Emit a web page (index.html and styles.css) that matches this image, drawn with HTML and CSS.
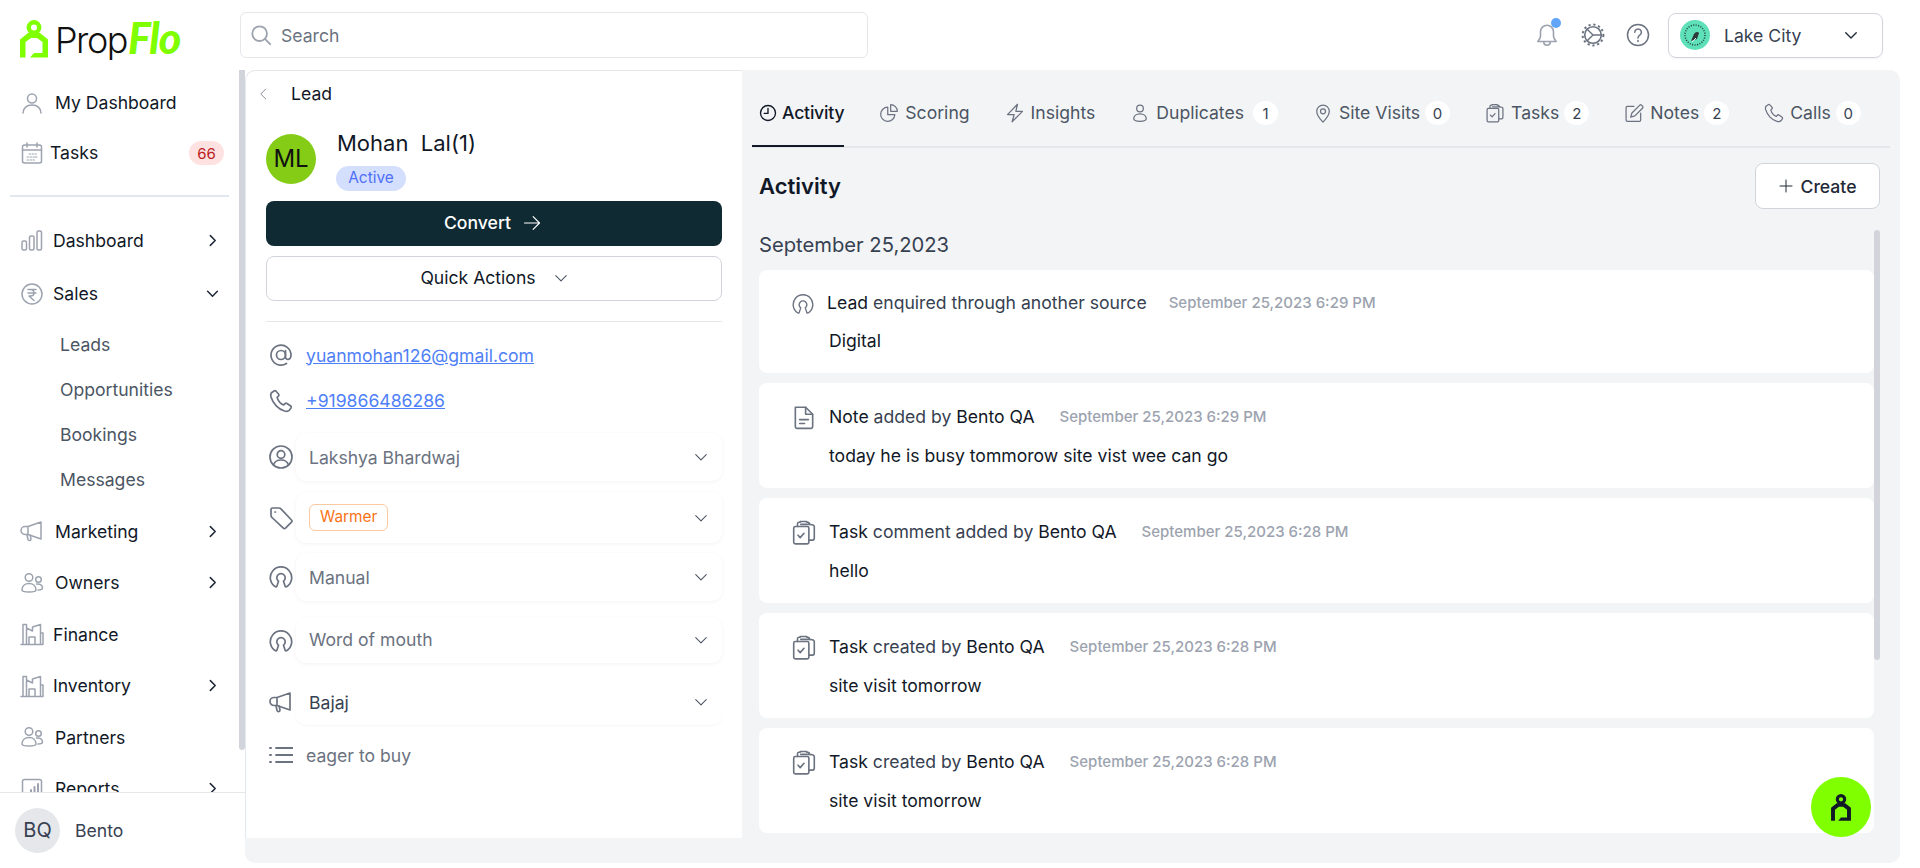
FILE: index.html
```html
<!DOCTYPE html>
<html lang="en">
<head>
  <meta charset="utf-8">
  <title>PropFlo - Lead</title>
  <link rel="stylesheet" href="styles.css">
</head>
<body>
<svg class="sprite" xmlns="http://www.w3.org/2000/svg">
  <symbol id="i-user" viewBox="0 0 24 24"><circle cx="12" cy="7.500" r="4.500"/><path d="M3 22c0-5 4-8 9-8s9 3 9 8"/></symbol>
  <symbol id="i-calendar" viewBox="0 0 24 24"><rect x="2.500" y="4" width="19" height="18" rx="2"/><path d="M2.500 9h19M7 2v4M17 2v4"/><path d="M9 13h1.500M12 13h1.500M15 13h1.500M7 16h1.500M10 16h1.500M13 16h1.500M15.500 16h1.500M7 19h1.500M10 19h1.500M13 19h1.500" stroke-width="1"/></symbol>
  <symbol id="i-bars" viewBox="0 0 24 24"><rect x="2" y="13" width="4.500" height="9" rx="1.500"/><rect x="9.500" y="8" width="4.500" height="14" rx="1.500"/><rect x="17" y="3" width="4.500" height="19" rx="1.500"/></symbol>
  <symbol id="i-rupee" viewBox="0 0 24 24"><circle cx="12" cy="12" r="10"/><path d="M8 7.500h8M8 11h8M9 7.500h1.500c2 0 3.500 1.500 3.500 3.500s-1.500 3-3.500 3H9l5 4.500"/></symbol>
  <symbol id="i-mega" viewBox="0 0 24 24"><path d="M21 3 8 7.500H5a3.500 3.500 0 0 0 0 8h3L21 20zM21 3v17M8 7.500v8"/><path d="M7 15.500l1 5c.2 1.500 3 1.500 3-.5l-.8-3.800"/></symbol>
  <symbol id="i-users" viewBox="0 0 24 24"><circle cx="9" cy="6.500" r="3.800"/><circle cx="18.500" cy="8.500" r="2.800"/><path d="M2 19c0-4 3-6.500 7-6.500s7 2.500 7 6.500c0 1.500-3 2-7 2s-7-.5-7-2z"/><path d="M16.500 13c3 -.5 6 1 6 4 0 1.500-1.500 2-4.500 2"/></symbol>
  <symbol id="i-build" viewBox="0 0 24 24"><path d="M1 22.500h22M3 22V2.500h3.500V22M6.500 6l6 3V5l8-2.500V22M9 22v-7h6v7M20.500 11H23v11"/></symbol>
  <symbol id="i-report" viewBox="0 0 24 24"><rect x="2.500" y="2.500" width="19" height="19" rx="2"/><path d="M7 18v-2M11 18v-5M14.500 18V10M18 18V7" stroke-width="2"/></symbol>
  <symbol id="i-bell" viewBox="0 0 24 24"><path d="M3.500 18c1.500-1.500 2.500-2.500 2.500-5V9a6 6 0 0 1 12 0v4c0 2.500 1 3.500 2.500 5z"/><path d="M9 18.500c0 4 6 4 6 0"/></symbol>
  <symbol id="i-gear" viewBox="0 0 24 24"><circle cx="12" cy="12" r="8.300" stroke-width="1.600"/><circle cx="12" cy="12" r="10.400" stroke-width="2" stroke-dasharray="2.200 2.700" stroke-linecap="butt"/><path d="M6.200 6.200 12 12l-5.800 5.800M12 12h8.300" stroke-width="1.400"/></symbol>
  <symbol id="i-help" viewBox="0 0 24 24"><circle cx="12" cy="12" r="10.500"/><path d="M8.800 9.300a3.300 3.300 0 1 1 5 2.800c-1.200.8-1.800 1.500-1.800 3"/><path d="M12 17.500v1"/></symbol>
  <symbol id="i-search" viewBox="0 0 24 24"><circle cx="10.500" cy="10.500" r="8"/><path d="m16.500 16.500 5.500 5.500"/></symbol>
  <symbol id="i-source" viewBox="0 0 24 24"><path d="M6.500 21.800a10.700 10.700 0 1 1 11 0c-.6.300-1 .1-1.300-.4l-1.700-5.200a4.200 4.200 0 1 0-5 0l-1.700 5.200c-.3.500-.7.700-1.300.4z"/></symbol>
  <symbol id="i-at" viewBox="0 0 24 24"><circle cx="12" cy="12" r="4.500"/><path d="M16.500 7.500V14c0 3.500 5.500 3.500 5.500-2a10 10 0 1 0-4.500 8.500"/></symbol>
  <symbol id="i-phone" viewBox="0 0 24 24"><path d="M5 2 2.800 3.500C1.500 4.500 1.500 6 2 8c2 6.500 7.500 12.500 13.500 14 2 .5 4 .2 5-1l1.500-2c.5-.7.3-1.500-.3-2L18 14.500c-.7-.5-1.500-.4-2 .2l-1.200 1.300c-3-1-5.500-4-6.700-7.500l1.300-1.300c.6-.5.7-1.300.3-2L7.300 2.500C6.800 1.800 5.800 1.500 5 2z"/></symbol>
  <symbol id="i-ucircle" viewBox="0 0 24 24"><circle cx="12" cy="12" r="11"/><circle cx="12" cy="9.500" r="3.800"/><path d="M4.500 20c1-3.500 4-5 7.500-5s6.500 1.500 7.500 5"/></symbol>
  <symbol id="i-tag" viewBox="0 0 24 24"><path d="M2 3.500C2 2.500 2.500 2 3.500 2H10c.7 0 1.200.2 1.700.7L22.500 14c.7.7.7 1.500 0 2.200l-6 6c-.7.7-1.500.7-2.200 0L3 11.500c-.7-.6-1-1-1-2z"/><path d="M6 6h.5"/></symbol>
  <symbol id="i-list" viewBox="0 0 24 24"><path d="M7 5h17M7 12h17M7 19h17" stroke-width="1.800"/><path d="M1 5h1M1 12h1M1 19h1" stroke-width="2"/></symbol>
  <symbol id="i-clock" viewBox="0 0 24 24"><circle cx="12" cy="12" r="10"/><path d="M12 6v6.500H7"/></symbol>
  <symbol id="i-pie" viewBox="0 0 24 24"><path d="M10.500 5a8.500 8.500 0 1 0 8.500 9h-8.500z"/><path d="M14 2a8 8 0 0 1 8 8h-8z"/></symbol>
  <symbol id="i-bolt" viewBox="0 0 24 24"><path d="M15 1.500 3 14h8l-2.500 8.500L21 10h-8z"/></symbol>
  <symbol id="i-person" viewBox="0 0 24 24"><circle cx="12" cy="6.500" r="4"/><path d="M4.500 19c0-3.500 3-6 7.500-6s7.500 2.500 7.500 6c0 2-3 3-7.500 3s-7.500-1-7.500-3z"/></symbol>
  <symbol id="i-pin" viewBox="0 0 24 24"><path d="M12 23C8 19 4.500 14.500 4.500 10a7.500 7.500 0 0 1 15 0c0 4.500-3.500 9-7.500 13z"/><circle cx="12" cy="10" r="3"/></symbol>
  <symbol id="i-clip" viewBox="0 0 24 24"><rect x="2.500" y="6.500" width="14" height="16" rx="1.500"/><path d="M6 6.500V4c0-1 .5-1.500 1.500-1.500h1V1.800h6v.7h1c1 0 1.500.5 1.500 1.500v.5M9 4.500h7c3.500 0 5.500.5 5.500 2V17c0 1.500-.5 2-1.500 2h-3.500"/><path d="m6.500 14.500 2 2.200 3.500-4"/></symbol>
  <symbol id="i-note" viewBox="0 0 24 24"><path d="M4 2.500h9.500L20 9v11.500c0 1-.5 1.500-1.500 1.500h-13c-1 0-1.500-.5-1.500-1.500z"/><path d="M13.500 2.500V9H20M8 14h8M8 17.500h4.500"/></symbol>
  <symbol id="i-edit" viewBox="0 0 24 24"><path d="M12 4H4c-1 0-1.500.5-1.500 1.500v15c0 1 .5 1.500 1.500 1.500h14.500c1 0 1.500-.5 1.500-1.500V12"/><path d="M19 2.500 9.500 12 8 17l5-1.500L22.500 6c.5-1 .3-1.500-.2-2.200l-1.500-1.300c-.6-.6-1.300-.5-1.800 0z"/></symbol>
  <symbol id="i-plus" viewBox="0 0 24 24"><path d="M12 3v18M3 12h18"/></symbol>
  <symbol id="i-arrow" viewBox="0 0 24 24"><path d="M2 12h20M13.500 3.500 22 12l-8.500 8.500"/></symbol>
  <symbol id="i-down" viewBox="0 0 24 24"><path d="m3 8 9 9 9-9"/></symbol>
  <symbol id="i-right" viewBox="0 0 24 24"><path d="m8 3 9 9-9 9"/></symbol>
  <symbol id="i-left" viewBox="0 0 24 24"><path d="m16 3-9 9 9 9"/></symbol>
  <symbol id="i-mark" viewBox="0 0 28 38"><circle cx="14" cy="7.500" r="5.200" fill="none" stroke="currentColor" stroke-width="4.400"/><path d="M0 37.500V19.500L8 13h12l8 6.500v18H10l4-4.500h8.500V22l-5.500-4h-6l-5.500 4v15.500z" fill="currentColor" stroke="none"/></symbol>
</svg>

<header class="topbar">
  <div class="logo">
    <svg class="logo-mark"><use href="#i-mark"/></svg>
    <span class="logo-prop">Prop</span><span class="logo-flo">Flo</span>
  </div>
  <label class="search">
    <svg class="ico search-ico"><use href="#i-search"/></svg>
    <span>Search</span>
  </label>
  <div class="top-actions">
    <span class="bell"><svg class="ico"><use href="#i-bell"/></svg><i class="bell-dot"></i></span>
    <svg class="ico top-ico"><use href="#i-gear"/></svg>
    <svg class="ico top-ico"><use href="#i-help"/></svg>
    <div class="project">
      <svg class="project-pic" viewBox="0 0 30 30">
        <circle cx="15" cy="15" r="15" fill="#5ee0b8"/>
        <circle cx="15" cy="15" r="10" fill="none" stroke="#1f3b36" stroke-width="1.500" stroke-dasharray="1 1.500"/>
        <path d="M11 21l3-7c1-2 4-3 5-1l-2 6z" fill="#2f3a3a"/>
        <path d="M12 22l4-4" stroke="#e9efe9" stroke-width="1"/>
      </svg>
      <span class="project-name">Lake City</span>
      <svg class="ico project-chev"><use href="#i-down"/></svg>
    </div>
  </div>
</header>

<div class="body">
  <aside class="sidebar">
    <nav class="nav">
      <a class="nav-top nav-wide"><svg class="ico nav-ico"><use href="#i-user"/></svg>My Dashboard</a>
      <a class="nav-top nav-tasks"><svg class="ico nav-ico"><use href="#i-calendar"/></svg>Tasks<b class="count">66</b></a>
      <hr class="nav-line">
      <a class="nav-item"><svg class="ico nav-ico"><use href="#i-bars"/></svg>Dashboard<svg class="ico chev"><use href="#i-right"/></svg></a>
      <a class="nav-item nav-sales"><svg class="ico nav-ico"><use href="#i-rupee"/></svg>Sales<svg class="ico chev"><use href="#i-down"/></svg></a>
      <div class="subnav">
        <a>Leads</a>
        <a>Opportunities</a>
        <a>Bookings</a>
        <a>Messages</a>
      </div>
      <a class="nav-item nav-wide"><svg class="ico nav-ico"><use href="#i-mega"/></svg>Marketing<svg class="ico chev"><use href="#i-right"/></svg></a>
      <a class="nav-item nav-wide"><svg class="ico nav-ico"><use href="#i-users"/></svg>Owners<svg class="ico chev"><use href="#i-right"/></svg></a>
      <a class="nav-item"><svg class="ico nav-ico"><use href="#i-build"/></svg>Finance</a>
      <a class="nav-item"><svg class="ico nav-ico"><use href="#i-build"/></svg>Inventory<svg class="ico chev"><use href="#i-right"/></svg></a>
      <a class="nav-item nav-wide"><svg class="ico nav-ico"><use href="#i-users"/></svg>Partners</a>
      <a class="nav-item nav-wide"><svg class="ico nav-ico"><use href="#i-report"/></svg>Reports<svg class="ico chev"><use href="#i-right"/></svg></a>
    </nav>
    <div class="side-thumb"></div>
    <div class="side-user">
      <span class="side-avatar">BQ</span>
      <span>Bento</span>
    </div>
  </aside>

  <main class="main">
    <section class="lead">
      <div class="lead-back"><svg class="ico back-ico"><use href="#i-left"/></svg>Lead</div>
      <div class="lead-profile">
        <span class="lead-avatar">ML</span>
        <div>
          <div class="lead-name">Mohan&nbsp; Lal(1)</div>
          <span class="pill">Active</span>
        </div>
      </div>
      <a class="btn btn-dark">Convert<svg class="ico btn-ico"><use href="#i-arrow"/></svg></a>
      <a class="btn btn-line">Quick Actions<svg class="ico btn-chev"><use href="#i-down"/></svg></a>
      <hr class="lead-line">

      <div class="contact contact-mail"><svg class="ico det-ico"><use href="#i-at"/></svg><a href="#">yuanmohan126@gmail.com</a></div>
      <div class="contact"><svg class="ico det-ico"><use href="#i-phone"/></svg><a href="#">+919866486286</a></div>

      <div class="field field-owner"><svg class="ico det-ico"><use href="#i-ucircle"/></svg><div class="field-box">Lakshya Bhardwaj<svg class="ico field-chev"><use href="#i-down"/></svg></div></div>
      <div class="field field-stage"><svg class="ico det-ico"><use href="#i-tag"/></svg><div class="field-box"><span class="tag">Warmer</span><svg class="ico field-chev"><use href="#i-down"/></svg></div></div>
      <div class="field field-source"><svg class="ico det-ico"><use href="#i-source"/></svg><div class="field-box">Manual<svg class="ico field-chev"><use href="#i-down"/></svg></div></div>
      <div class="field field-word"><svg class="ico det-ico"><use href="#i-source"/></svg><div class="field-box">Word of mouth<svg class="ico field-chev"><use href="#i-down"/></svg></div></div>
      <div class="field field-camp"><svg class="ico det-ico"><use href="#i-mega"/></svg><div class="field-box">Bajaj<svg class="ico field-chev"><use href="#i-down"/></svg></div></div>
      <div class="contact contact-note"><svg class="ico det-ico"><use href="#i-list"/></svg><span>eager to buy</span></div>
    </section>

    <section class="feed">
      <div class="tabs">
        <a class="tab tab-on"><svg class="ico tab-ico"><use href="#i-clock"/></svg>Activity</a>
        <a class="tab"><svg class="ico tab-ico"><use href="#i-pie"/></svg>Scoring</a>
        <a class="tab"><svg class="ico tab-ico"><use href="#i-bolt"/></svg>Insights</a>
        <a class="tab"><svg class="ico tab-ico"><use href="#i-person"/></svg>Duplicates<b class="num num-first">1</b></a>
        <a class="tab"><svg class="ico tab-ico"><use href="#i-pin"/></svg>Site Visits<b class="num">0</b></a>
        <a class="tab"><svg class="ico tab-ico"><use href="#i-clip"/></svg>Tasks<b class="num">2</b></a>
        <a class="tab"><svg class="ico tab-ico"><use href="#i-edit"/></svg>Notes<b class="num">2</b></a>
        <a class="tab"><svg class="ico tab-ico"><use href="#i-phone"/></svg>Calls<b class="num">0</b></a>
      </div>
      <div class="feed-head">
        <h2>Activity</h2>
        <a class="create"><svg class="ico create-ico"><use href="#i-plus"/></svg>Create</a>
      </div>
      <div class="feed-date">September 25,2023</div>
      <div class="feed-list">
        <article class="card card-first">
          <div class="card-head"><svg class="ico card-ico"><use href="#i-source"/></svg><p><span class="dark">Lead</span> enquired through another source</p><time>September 25,2023 6:29 PM</time></div>
          <p class="card-text">Digital</p>
        </article>
        <article class="card">
          <div class="card-head"><svg class="ico card-ico"><use href="#i-note"/></svg><p><span class="dark">Note</span> added by <span class="dark">Bento QA</span></p><time>September 25,2023 6:29 PM</time></div>
          <p class="card-text">today he is busy tommorow site vist wee can go</p>
        </article>
        <article class="card">
          <div class="card-head"><svg class="ico card-ico"><use href="#i-clip"/></svg><p><span class="dark">Task</span> comment added by <span class="dark">Bento QA</span></p><time>September 25,2023 6:28 PM</time></div>
          <p class="card-text">hello</p>
        </article>
        <article class="card">
          <div class="card-head"><svg class="ico card-ico"><use href="#i-clip"/></svg><p><span class="dark">Task</span> created by <span class="dark">Bento QA</span></p><time>September 25,2023 6:28 PM</time></div>
          <p class="card-text">site visit tomorrow</p>
        </article>
        <article class="card">
          <div class="card-head"><svg class="ico card-ico"><use href="#i-clip"/></svg><p><span class="dark">Task</span> created by <span class="dark">Bento QA</span></p><time>September 25,2023 6:28 PM</time></div>
          <p class="card-text">site visit tomorrow</p>
        </article>
      </div>
      <div class="feed-thumb"></div>
    </section>

    <a class="fab"><svg class="fab-mark"><use href="#i-mark"/></svg></a>
  </main>
</div>
</body>
</html>
```

FILE: styles.css
```css
* { box-sizing: border-box; }

html, body { height: 100%; }

body {
  margin: 0;
  overflow: hidden;
  background: #fff;
  color: #111827;
  font-family: Inter, "Liberation Sans", sans-serif;
  font-size: 17.600px;
}

.sprite { display: none; }

a { color: inherit; text-decoration: none; }
p { margin: 0; }

.ico {
  fill: none;
  stroke: currentColor;
  stroke-width: 1.5;
  stroke-linecap: round;
  stroke-linejoin: round;
  flex: none;
}

/* top bar */
.topbar {
  display: flex;
  align-items: center;
  height: 70px;
  padding-right: 37px;
}

.logo {
  display: flex;
  align-items: flex-start;
  width: 240px;
  height: 70px;
  padding: 20px 0 0 20px;
}

.logo-mark { width: 28px; height: 38px; color: #7fff00; margin-right: 7px; }

.logo-prop {
  font-family: Inter, sans-serif;
  font-weight: 300;
  font-size: 36px;
  line-height: 40px;
  letter-spacing: -1.500px;
  color: #111;
}

.logo-flo {
  margin-left: 1px;
  font-family: Lato, sans-serif;
  font-style: italic;
  font-weight: 900;
  font-size: 43px;
  line-height: 36px;
  letter-spacing: -1px;
  color: #7fff00;
}

.search {
  display: flex;
  align-items: center;
  gap: 9px;
  width: 628px;
  height: 46px;
  padding-left: 9px;
  border: 1px solid #e5e7eb;
  border-radius: 6px;
  color: #6b7280;
}

.search-ico { width: 22px; height: 22px; color: #9ca3af; stroke-width: 2; }

.top-actions {
  display: flex;
  align-items: center;
  margin-left: auto;
  gap: 21px;
}

.bell { position: relative; display: flex; color: #9ca3af; }
.bell .ico { width: 26px; height: 28px; }

.bell-dot {
  position: absolute;
  top: -3px;
  right: -1px;
  width: 10px;
  height: 10px;
  border-radius: 50%;
  background: #60a5fa;
}

.top-ico { width: 24px; height: 24px; color: #6b7280; }

.project {
  display: flex;
  align-items: center;
  width: 215px;
  height: 45px;
  margin-left: -3px;
  padding: 0 24px 0 11px;
  border: 1px solid #d1d5db;
  border-radius: 8px;
  box-shadow: 0 1px 2px rgba(0, 0, 0, .05);
  color: #374151;
}

.project-pic { width: 30px; height: 30px; flex: none; }
.project-name { margin-left: 14px; }
.project-chev { width: 14px; height: 14px; margin-left: auto; color: #1f2937; stroke-width: 2.400; }

/* layout */
.body { display: flex; height: 798px; }

/* sidebar */
.sidebar {
  position: relative;
  display: flex;
  flex-direction: column;
  flex: none;
  width: 245px;
}

.nav { height: 722px; overflow: hidden; padding-top: 8px; padding-right: 6px; }

.nav a { display: flex; align-items: center; }

.nav-top, .nav-item { padding-left: 20px; gap: 9px; }
.nav-top { height: 49px; }
.nav-item { height: 51.500px; }
.nav-wide { gap: 11px; }
.nav-tasks { gap: 6px; margin-top: 1px; }
.nav-sales { margin-top: 2px; }

.nav-ico { width: 24px; height: 24px; color: #9ca3af; }

.chev {
  width: 13px;
  height: 13px;
  margin-left: auto;
  margin-right: 20px;
  color: #1f2937;
  stroke-width: 2.800;
}

.count {
  margin-left: auto;
  margin-right: 15px;
  width: 35px;
  height: 24px;
  border-radius: 12px;
  background: #fee2e2;
  color: #b91c1c;
  font-size: 15px;
  font-weight: 400;
  line-height: 25px;
  text-align: center;
}

.nav-line { height: 2px; margin: 18px 10px 17.500px 10px; border: 0; background: #e2e8f0; }

.subnav { margin: 2.500px 0 3.500px; }
.nav .subnav a { height: 45px; padding-left: 60px; color: #4b5563; }

.side-thumb {
  position: absolute;
  top: 0;
  right: 0;
  width: 6px;
  height: 680px;
  border-radius: 0 0 3px 3px;
  background: #d1d5db;
}

.side-user {
  display: flex;
  align-items: center;
  gap: 15px;
  height: 76px;
  padding-left: 15px;
  border-top: 1px solid #e5e7eb;
  color: #374151;
}

.side-avatar {
  width: 45px;
  height: 45px;
  border-radius: 50%;
  background: #e5e7eb;
  font-size: 20px;
  line-height: 45px;
  text-align: center;
}

/* main area */
.main {
  position: relative;
  display: flex;
  align-items: flex-start;
  width: 1655px;
  height: 793px;
  border-radius: 10px;
  background: #f3f4f6;
}

.lead {
  flex: none;
  width: 497px;
  height: 768px;
  padding: 0 20px 0 20px;
  border-top: 1px solid #e5e7eb;
  border-left: 1px solid #e2e8f0;
  border-top-left-radius: 10px;
  background: #fff;
}

.lead-back { display: flex; align-items: center; height: 45px; color: #111827; }
.back-ico { width: 13px; height: 16px; margin-left: -9px; margin-right: 21px; color: #6b7280; }

.lead-profile { display: flex; align-items: flex-start; gap: 21px; margin-top: 17px; }

.lead-avatar {
  width: 50px;
  height: 50px;
  margin-top: 1px;
  border-radius: 50%;
  background: #84cc16;
  color: #111;
  font-size: 24px;
  line-height: 50px;
  text-align: center;
}

.lead-name { margin-top: -1px; font-size: 22px; line-height: 22px; }

.pill {
  display: block;
  width: 70px;
  height: 25px;
  margin-top: 12px;
  margin-left: -1px;
  border-radius: 13px;
  background: #d4dffe;
  color: #4f6ef7;
  font-size: 15.400px;
  line-height: 24px;
  text-align: center;
}

.btn {
  display: flex;
  align-items: center;
  justify-content: center;
  height: 45px;
  padding-bottom: 2px;
  border-radius: 8px;
}

.btn-dark { margin-top: 10px; padding-right: 3px; background: #102a33; color: #fff; font-weight: 500; gap: 12px; }
.btn-ico { width: 18px; height: 18px; }
.btn-line { margin-top: 10px; border: 1px solid #d1d5db; gap: 18px; }
.btn-chev { width: 14px; height: 14px; color: #4b5563; stroke-width: 1.800; }

.lead-line { height: 1px; margin: 20px 0 10px; border: 0; background: #e5e7eb; }

.contact { display: flex; align-items: center; height: 45px; color: #6b7280; }
.contact a { color: #4f7ff7; text-decoration: underline; }
.contact .det-ico { margin-right: 13px; }
.contact-mail { height: 46px; }
.contact-note { margin-top: 8px; height: 44px; }

.det-ico { width: 24px; height: 24px; margin-left: 3px; color: #6b7280; stroke-width: 1.700; }

.field { display: flex; align-items: center; gap: 3px; color: #6b7280; }

.field-box {
  display: flex;
  align-items: center;
  flex: 1;
  height: 48px;
  padding: 0 14px 0 13px;
  border-radius: 10px;
  box-shadow: 0 1px 4px rgba(17, 24, 39, .05);
}

.field-chev { width: 14px; height: 14px; margin-left: auto; color: #4b5563; stroke-width: 1.800; }

.field-owner { margin-top: 10px; }
.field-stage { margin-top: 11px; }
.field-stage .field-box { height: 51px; }
.field-source { margin-top: 10px; }
.field-word { margin-top: 17px; }
.field-word .field-box { height: 45px; padding-bottom: 2px; }
.field-camp { margin-top: 16px; color: #374151; }
.field-camp .field-box { height: 46px; box-shadow: 0 1px 2px rgba(17, 24, 39, .04); }

.tag {
  height: 27px;
  padding: 0 10px;
  border: 1px solid #fdc9a0;
  border-radius: 6px;
  color: #f97316;
  font-size: 15.400px;
  line-height: 24px;
}

/* activity feed */
.feed {
  position: relative;
  flex: 1;
  height: 768px;
  padding: 0 10px;
  overflow: hidden;
  color: #374151;
}

.tabs {
  display: flex;
  gap: 35px;
  height: 78px;
  border-bottom: 2px solid #e5e7eb;
}

.tab {
  display: flex;
  align-items: center;
  gap: 6px;
  height: 77px;
  padding-top: 8px;
  white-space: nowrap;
  color: #4b5563;
}

.tab-on {
  gap: 5px;
  padding-top: 10px;
  padding-left: 7px;
  border-bottom: 2px solid #111827;
  color: #111827;
  font-weight: 500;
  letter-spacing: -.2px;
}

.tab-ico { width: 20px; height: 20px; color: #6b7280; }
.tab-on .tab-ico { width: 18px; height: 18px; color: #111827; stroke-width: 1.800; }

.num {
  width: 25px;
  height: 24px;
  margin-left: -1px;
  border-radius: 50%;
  background: #fff;
  color: #374151;
  font-size: 15px;
  font-weight: 400;
  line-height: 25px;
  text-align: center;
}

.num-first { margin-left: 3px; }

.feed-head {
  display: flex;
  align-items: center;
  justify-content: space-between;
  height: 46px;
  margin: 15px 10px 0 7px;
}

.feed-head h2 { margin: 0; padding-bottom: 1px; color: #111827; font-size: 22px; font-weight: 600; }

.create {
  display: flex;
  align-items: center;
  justify-content: center;
  gap: 6px;
  width: 125px;
  height: 46px;
  border: 1px solid #d1d5db;
  border-radius: 8px;
  background: #fff;
  color: #1f2937;
  font-weight: 500;
}

.create-ico { width: 16px; height: 16px; }

.feed-date { margin: 24px 0 13px 7px; font-size: 20.200px; line-height: 24px; }

.feed-list { display: flex; flex-direction: column; gap: 10px; margin: 0 16px 0 7px; }

.card {
  flex: none;
  height: 105px;
  padding: 21px 0 0 33px;
  border-radius: 8px;
  background: #fff;
}

.card-first { height: 103px; padding-top: 20px; }

.card-head { display: flex; align-items: center; height: 24px; color: #374151; }
.card-head p { margin-right: 25px; }
.card-first .card-head p { margin-right: 22px; }
.card-head time { color: #9ca3af; font-size: 15px; font-weight: 500; }
.card-ico { width: 26px; height: 27px; margin: 3px 12px 0 -1px; color: #6b7280; }
.card-first .card-ico { width: 22px; height: 24px; margin: 3px 13px 0 0; }

.dark { color: #111827; }

.card-text { margin-top: 16px; padding-left: 37px; line-height: 24px; color: #111827; }
.card-first .card-text { margin-top: 15px; }

.feed-thumb {
  position: absolute;
  top: 160px;
  right: 20px;
  width: 6px;
  height: 430px;
  border-radius: 3px;
  background: #d1d5db;
}

.fab {
  position: absolute;
  left: 1566px;
  top: 707px;
  display: flex;
  align-items: center;
  justify-content: center;
  width: 60px;
  height: 60px;
  border-radius: 50%;
  background: #80ff00;
}

.fab-mark { width: 20px; height: 27px; color: #111827; }
```
